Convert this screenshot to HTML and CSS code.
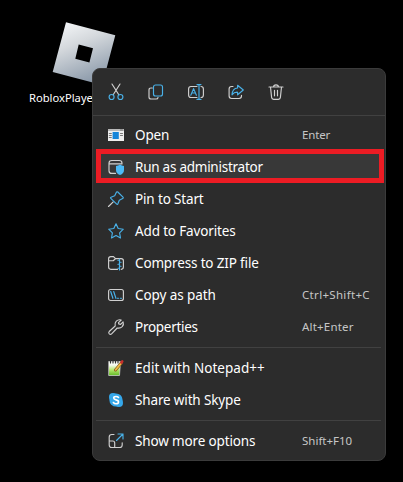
FILE: index.html
```html
<!DOCTYPE html>
<html lang="en">
<head>
<meta charset="utf-8">
<title>Context menu</title>
<link rel="stylesheet" href="styles.css">
</head>
<body>
<div class="desktop">
  <div class="shortcut">
    <svg class="logo" width="64" height="64" viewBox="0 0 64 64">
      <defs><linearGradient id="steel" x1="0.2" y1="0" x2="0.6" y2="1"><stop offset="0" stop-color="#f3f5f7"/><stop offset=".35" stop-color="#d5d9dd"/><stop offset="1" stop-color="#8796a7"/></linearGradient></defs>
      <path fill="url(#steel)" fill-rule="evenodd" d="M14 .3 63.3 13.3 50.2 63 .7 50ZM26.7 22.6 23.3 36.8 37.4 40.6 41 26.2Z"/>
    </svg>
    <span class="shortcut-name">RobloxPlayer</span>
  </div>

  <div class="menu">
    <div class="toolbar">
      <svg class="icon" viewBox="0 0 16 16"><path d="M4 0 10.8 10.7M12 0 5.2 10.7"/><g class="blue"><circle cx="3.6" cy="13" r="2.5"/><circle cx="12.4" cy="13" r="2.5"/></g></svg>
      <svg class="icon" viewBox="0 0 16 16"><path d="M4.300 4H3Q1 4 1 6v7q0 2 2 2h5q2 0 2-1.600"/><rect class="blue" x="5.500" y="1" width="9" height="11" rx="2"/></svg>
      <svg class="icon" viewBox="0 0 16 16"><path d="M9 2.500H3Q.6 2.500.6 5v6q0 2.500 2.400 2.500h6M13 2.500q2.400 0 2.400 2.500v6q0 2.500-2.400 2.500"/><path class="blue" d="M9 .6h4M11 .6v14.800M9 15.400h4M2.800 11.200 5.600 4.600l2.800 6.600M3.700 9h3.800"/></svg>
      <svg class="icon" viewBox="0 0 16 16"><path d="M5 2.500H3.500q-2.400 0-2.400 2.400v7.200q0 2.400 2.400 2.400h7.600q2.400 0 2.400-2.400v-.8"/><path class="blue" d="M9.600 1.300 15.300 6l-5.700 4.800V8.200Q6 8 4 10.800 4.400 4.300 9.600 4Z"/></svg>
      <svg class="icon" viewBox="0 0 16 16"><path d="M1 3h14M5.500 3Q5.600.8 8 .8T10.500 3M2.500 3l1.100 10.400q.2 1.900 2 1.900h4.800q1.800 0 2-1.900L13.500 3M6.500 6.300v5.500M9.500 6.300v5.500"/></svg>
    </div>
    <hr class="rule rule-top">

    <div class="item">
      <svg class="icon" viewBox="0 0 16 16"><path class="white" d="M0 2h16v12H0z"/><path fill="#b9b9b9" stroke="none" d="M0 2h16v2H0z"/><path fill="#1685d9" stroke="none" d="M4.600 5h6.200v7H4.600z"/><path stroke="#777" d="M1.300 6.500h2M1.300 8.500h2M1.300 10.500h2M12.500 6.500h2M12.500 8.500h2M12.500 3h2"/></svg>
      <span class="label open">Open</span><span class="keys enter">Enter</span>
    </div>
    <div class="item">
      <svg class="icon" viewBox="0 0 16 16"><path d="M7.500 14.400H3.700Q1 14.400 1 11.700V4.200q0-2.700 2.700-2.700h7.600Q14 1.500 14 4.200V5M1 4.800h13"/><path fill="#4cbaf6" stroke="none" d="M12 5.600q1.700 1.300 4 1.300v4q0 3.500-4 5.100-4-1.600-4-5.100v-4q2.300 0 4-1.300Z"/></svg>
      <span class="label run">Run as administrator</span>
      <span class="highlight"></span>
    </div>
    <div class="item">
      <svg class="icon" viewBox="0 0 16 16"><path d="M.5 15.500 5.200 10.800"/><path class="blue" d="m9.800 1 5.200 5.200q.7.900-.3 1.400L11.300 9.300 9.800 13q-.4.900-1.100.2L2.800 7.300q-.7-.7.200-1.100l3.700-1.500L8.400 1.300q.5-1 1.400-.3Z"/></svg>
      <span class="label pin">Pin to Start</span>
    </div>
    <div class="item">
      <svg class="icon" viewBox="0 0 16 16"><path class="blue" d="m8 .8 2.200 4.700 5.100.7-3.700 3.600.9 5.200L8 12.500 3.500 15l.9-5.200L.7 6.200l5.100-.7Z"/></svg>
      <span class="label fav">Add to Favorites</span>
    </div>
    <div class="item">
      <svg class="icon" viewBox="0 0 16 16"><path d="M9.500 14.300H2.800q-2.200 0-2.200-2.200V3.800q0-2.200 2.200-2.200h2.700l2 2h5.700q2.200 0 2.200 2.200v6.300q0 2.200-2.200 2.200M.6 5.700h4.600l2.200-2"/><path class="blue" d="M11.500 4v11M9.900 5.200h1.600M11.500 7.200h1.600M9.900 9.200h1.600M11.500 11.200h1.600M9.900 13.200h1.600"/></svg>
      <span class="label zip">Compress to ZIP file</span>
    </div>
    <div class="item">
      <svg class="icon" viewBox="0 0 16 16"><rect x=".6" y="2.500" width="14.800" height="11" rx="2"/><path class="blue" d="m2.700 4.500 2.200 6.800M5.700 4.500l2.200 6.800M9.300 11.200h1.200M12.300 11.200h1.200"/></svg>
      <span class="label copy">Copy as path</span><span class="keys ctrl">Ctrl+Shift+C</span>
    </div>
    <div class="item">
      <svg class="icon" viewBox="0 0 16 16"><path d="M13.200 1.100Q10.500.1 8.300 2.200 6.400 4.300 7.200 7L1.200 12.500q-1 1.200.1 2.300 1.200 1.100 2.300 0L9.200 9q3 .7 5-1.300 1.900-2.100.9-4.800L12.600 5.400 10.700 4.900 10.500 3.700Z"/></svg>
      <span class="label prop">Properties</span><span class="keys alt">Alt+Enter</span>
    </div>
    <hr class="rule">

    <div class="item">
      <svg class="icon" viewBox="0 0 16 16"><defs><linearGradient id="page" x1="0" y1="0" x2="0" y2="1"><stop offset=".25" stop-color="#f8fbf3"/><stop offset=".6" stop-color="#b5e86c"/><stop offset="1" stop-color="#62ba26"/></linearGradient></defs><path fill="url(#page)" stroke="#ddd" stroke-width=".7" d="M1 1.500h11.500L11.500 15.500H1Z"/><path stroke="#333" d="M2.500.5v2.500M5 .5v2.500M7.500.5v2.500M10 .5v2.500"/><path stroke="#825522" stroke-width="3" d="m7.500 10 6-7.200"/><path stroke="#f0bd43" stroke-width="1.800" d="m7.700 9.800 5.500-6.700"/><path stroke="#c9302d" stroke-width="2.500" d="m13.300 2.600 1-1.200"/></svg>
      <span class="label note">Edit with Notepad++</span>
    </div>
    <div class="item">
      <svg class="icon" viewBox="0 0 16 16"><g fill="#35a7ea" stroke="none"><circle cx="8" cy="8" r="6.600"/><circle cx="5" cy="5" r="4"/><circle cx="11" cy="11" r="4"/></g><path stroke="#fff" stroke-width="1.600" d="M10.500 5.500Q9.800 4.500 8 4.500 5.700 4.500 5.700 6.100 5.700 7.400 8 7.900q2.500.5 2.500 2 0 1.800-2.500 1.800-1.800 0-2.600-1.200"/></svg>
      <span class="label skype">Share with Skype</span>
    </div>
    <hr class="rule">

    <div class="item">
      <svg class="icon" viewBox="0 0 16 16"><path d="M6 1.500H3.800Q1.200 1.500 1.200 4v8q0 2.500 2.500 2.500h8q2.500 0 2.500-2.500V9.800M1.200 8h3.500q2 0 2 2v4.500"/><path class="blue" d="M8.500 7.500 15 1M10 1h5v5"/></svg>
      <span class="label more">Show more options</span><span class="keys f10">Shift+F10</span>
    </div>
  </div>
</div>
</body>
</html>
```

FILE: styles.css
```css
* { box-sizing: border-box; }
body {
  margin: 0;
  background: #000;
  font-family: "Noto Sans", "Open Sans", sans-serif;
}
.desktop {
  position: relative;
  width: 403px;
  height: 482px;
  overflow: hidden;
}
.shortcut {
  display: flex;
  flex-direction: column;
  align-items: flex-start;
  width: 110px;
  padding: 22px 0 0 29px;
}
.logo { margin-left: 23px; }
.shortcut-name {
  margin-top: 4px;
  font-size: 11.2px;
  line-height: 16px;
  color: #fff;
}
.menu {
  position: absolute;
  left: 92px;
  top: 68px;
  width: 294px;
  height: 393px;
  background: #2c2c2c;
  border: 1px solid #3b3b3b;
  border-radius: 8px;
}
.toolbar {
  display: flex;
  align-items: center;
  gap: 24px;
  height: 46px;
  padding-left: 15px;
}
.icon {
  display: block;
  flex: none;
  width: 16px;
  height: 16px;
  fill: none;
  stroke: #d0d0d0;
  stroke-width: 1.15;
  stroke-linecap: round;
  stroke-linejoin: round;
  overflow: visible;
}
.blue { stroke: #49b1e8; }
.white { fill: #eee; stroke: none; }
.rule {
  height: 1px;
  margin: 4px 4px 4px 3px;
  border: 0;
  background: #414141;
}
.rule-top { margin: 0 0 3px; }
.item {
  position: relative;
  display: flex;
  align-items: center;
  height: 32px;
  padding-left: 15px;
}
.label {
  position: relative;
  z-index: 1;
  width: 167px;
  margin-left: 11px;
  font-size: 13.5px;
  line-height: 20px;
  letter-spacing: -.15px;
  color: #fff;
  white-space: nowrap;
}
.run { letter-spacing: -.25px; }
.copy { letter-spacing: -.08px; }
.prop { letter-spacing: -.28px; }
.note { letter-spacing: .04px; }
.item .icon { position: relative; z-index: 1; }
.keys {
  font-size: 11.5px;
  line-height: 18px;
  color: #c6c6c6;
  white-space: nowrap;
}
.enter { letter-spacing: -.15px; }
.ctrl { letter-spacing: .32px; }
.alt { letter-spacing: .2px; }
.highlight {
  position: absolute;
  left: 3px;
  top: -2px;
  width: 288px;
  height: 34px;
  background: #383838;
  border: 5px solid #ec1c24;
}
```
